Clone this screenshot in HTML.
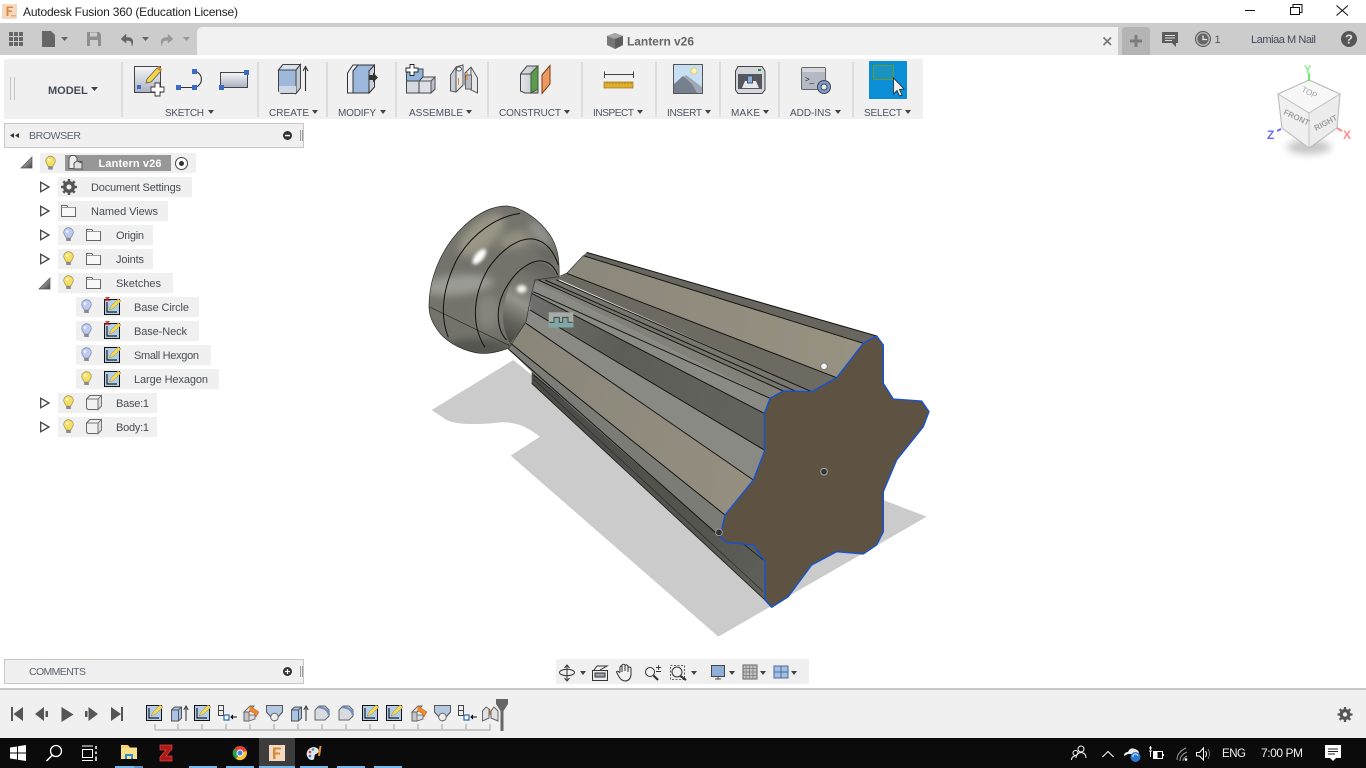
<!DOCTYPE html>
<html><head><meta charset="utf-8"><title>Autodesk Fusion 360</title>
<style>
html,body{margin:0;padding:0;background:#fff;width:1366px;height:768px;overflow:hidden}
svg{display:block;position:absolute;left:0;top:0}
text{font-family:"Liberation Sans",sans-serif}
.t{font-size:11px;fill:#474b55}
.l{font-size:10px;fill:#4b5262}
.ar{fill:#444}
</style></head><body>
<svg width="1366" height="768" viewBox="0 0 1366 768" xmlns="http://www.w3.org/2000/svg">
<defs>
<linearGradient id="g1" x1="0" y1="0" x2="0" y2="1"><stop offset="0" stop-color="#f6f7f9"/><stop offset="1" stop-color="#aab0bf"/></linearGradient>
<linearGradient id="gg" x1="0" y1="0" x2="1" y2="0"><stop offset="0" stop-color="#e6e8ec"/><stop offset="1" stop-color="#b4bac6"/></linearGradient>
<linearGradient id="neck" gradientUnits="userSpaceOnUse" x1="235" y1="420" x2="350" y2="190"><stop offset="0" stop-color="#474843"/><stop offset=".25" stop-color="#666660"/><stop offset=".48" stop-color="#94938c"/><stop offset=".62" stop-color="#7d7c75"/><stop offset="1" stop-color="#63635d"/></linearGradient>
<linearGradient id="tan" gradientUnits="userSpaceOnUse" x1="300" y1="300" x2="1300" y2="500"><stop offset="0" stop-color="#8a867a"/><stop offset="1" stop-color="#979181"/></linearGradient>
<linearGradient id="dk" x1="0" y1="0" x2="1" y2=".3"><stop offset="0" stop-color="#6f706b"/><stop offset=".45" stop-color="#5c5d57"/><stop offset="1" stop-color="#63635d"/></linearGradient>
<linearGradient id="lo" gradientUnits="userSpaceOnUse" x1="400" y1="600" x2="1030" y2="1180"><stop offset="0" stop-color="#4b4c47"/><stop offset=".7" stop-color="#54554f"/><stop offset="1" stop-color="#5f605a"/></linearGradient>
<linearGradient id="corner" x1="0" y1="0" x2="1" y2="1"><stop offset="0" stop-color="#ddd"/><stop offset="1" stop-color="#444"/></linearGradient>
<filter id="b1" x="-50%" y="-50%" width="200%" height="200%"><feGaussianBlur stdDeviation="4"/></filter>
<filter id="b2" x="-50%" y="-50%" width="200%" height="200%"><feGaussianBlur stdDeviation="12"/></filter>
<filter id="b3" x="-50%" y="-50%" width="200%" height="200%"><feGaussianBlur stdDeviation="5"/></filter>
<clipPath id="kc"><path d="M12 320 C12 220 60 130 120 75 C170 30 210 18 245 18 C290 22 340 55 375 105 C395 135 405 170 402 238 L340 330 L260 440 C230 455 190 462 165 460 C120 455 70 430 45 400 C25 375 12 350 12 320Z"/></clipPath>
<g id="by"><path d="M-2.300 4.500 C-2.600 2.500-4.800 1.500-4.800-1 A4.800 4.800 0 1 1 4.800-1 C4.800 1.500 2.600 2.500 2.300 4.500Z" fill="#f6df63" stroke="#a3985a" stroke-width=".8"/><rect x="-2.300" y="4.500" width="4.600" height="3" fill="#8a8a8a"/><circle cx="-1.300" cy="-2" r="1.500" fill="#fdf6c0"/></g>
<g id="bb"><path d="M-2.300 4.500 C-2.600 2.500-4.800 1.500-4.800-1 A4.800 4.800 0 1 1 4.800-1 C4.800 1.500 2.600 2.500 2.300 4.500Z" fill="#bccbee" stroke="#7f8bb0" stroke-width=".8"/><rect x="-2.300" y="4.500" width="4.600" height="3" fill="#8a8a8a"/><circle cx="-1.300" cy="-2" r="1.500" fill="#e7edfb"/></g>
<g id="fo"><path d="M.5 1.500H6L7 3.500H14.500V12.500H.5Z" fill="#f8f8f8" stroke="#666"/><path d="M.5 3.500H14.500" stroke="#999"/></g>
<g id="ar"><path d="M.7 .7 L9 5.500 L.7 10.300Z" fill="#fff" stroke="#444" stroke-width="1.300"/></g>
<g id="ex"><path d="M0 11 L11 0V11Z" fill="url(#corner)" stroke="#555" stroke-width=".7"/></g>
<g id="sk"><rect x=".5" y=".5" width="15" height="15" fill="#b4cde9" stroke="#111"/><path d="M3 3V13H13" fill="none" stroke="#222" stroke-width="1.200"/><path d="M5 11 L7 7 L14 0 L17 2 L10 9Z" fill="#f4d94a" stroke="#888" stroke-width=".5"/></g>
<g id="sk2"><use href="#sk"/><path d="M1-2H6L3.500 1Z" fill="#d33"/><rect x=".5" y=".8" width="6" height="1" fill="#c33"/></g>
<g id="bx"><path d="M.5 4 L4 .5 H15.500 V11 L12 14.500 H2 L.5 13Z" fill="#f1f1f1" stroke="#666"/><path d="M.5 4H12V14.500" fill="none" stroke="#777"/><path d="M12 4 L15.500 .5V11L12 14.500Z" fill="#ddd" stroke="#777"/></g>
<g id="tlext"><path d="M2 5 L5 2 H12 V13 L9 16 H2Z" fill="#a9c3e1" stroke="#555"/><path d="M2 5H9V16M9 5L12 2" fill="none" stroke="#556"/><path d="M16.500 16V2M14.300 5 L16.500 1 L18.700 5" fill="none" stroke="#444" stroke-width="1.100"/></g>
<g id="tlf"><path d="M1 7H6V16H1Z" fill="#c4c6ca" stroke="#666"/><path d="M1 7 L7 1H11L6 7Z" fill="#e8e8e8" stroke="#666"/><path d="M7 1 L16 7 L13 12 L11 8 L6 6" fill="#f08a20" stroke="#a55" stroke-width=".5"/><path d="M6 10H12V14L6 16Z" fill="#ddd" stroke="#777"/></g>
<g id="tld"><path d="M.5 .5H16.500V7L8.500 16 .5 7Z" fill="#b5c8e2" stroke="#555"/><circle cx="8.500" cy="12" r="3.800" fill="#eee" stroke="#666"/></g>
<g id="tlc"><path d="M1 15V5L5 1H11L15 5V11L11 15Z" fill="#d8dae0" stroke="#666"/><path d="M4 2.200 Q13 2 15 10" fill="none" stroke="#6b8fc0" stroke-width="2"/></g>
<g id="tlj"><path d="M.5 .5H5.500V5.500H.5ZM.5 5.500H5.500V10.500H.5Z" fill="#eee" stroke="#444"/><rect x="6" y="10" width="5" height="5" fill="#fff" stroke="#1a66b8" stroke-width="1.200"/><path d="M19 12H13M15 10 L13 12 L15 14" stroke="#111" fill="#111"/></g>
<g id="as"><path d="M.5 16 V6 L4 2 7 4 V13Z M16 16 V6 L12 2 9 6 V13Z" fill="#dfe1e6" stroke="#666"/><path d="M8 4V10" stroke="#e67f20"/></g>
</defs>

<!-- title bar -->
<rect x="0" y="0" width="1366" height="24" fill="#fff"/>
<rect x="2" y="4" width="15" height="15" fill="#f3d9c0"/>
<path d="M6.500 6.500H13V8H8.500V10.500H12V12H8.500V16H6.500Z" fill="#d98a3e"/><rect x="11" y="15" width="5" height="1.500" fill="#e8a874"/>
<text x="23" y="16" font-size="12" fill="#222" textLength="215">Autodesk Fusion 360 (Education License)</text>
<path d="M1245 10.500H1255" stroke="#111"/>
<path d="M1290.500 7.500H1299.500V14.500H1290.500ZM1293 7V4.500H1302V12.500H1300" fill="none" stroke="#111"/>
<path d="M1336.500 5.500 L1348 15.500 M1348 5.500 L1336.500 15.500" stroke="#111" stroke-width="1.100"/>

<!-- tab bar -->
<rect x="0" y="23" width="1366" height="32" fill="#cccccc"/>
<path d="M197 55V33Q197 27 203 27H1118V55Z" fill="#f1f1f1"/>
<path d="M1122 55V31Q1122 27 1126 27H1146Q1150 27 1150 31V55Z" fill="#b4b4b4"/>
<path d="M1130 41H1142M1136 35V47" stroke="#7b7b7b" stroke-width="3"/>
<g fill="#666"><rect x="9" y="32" width="4" height="4"/><rect x="14" y="32" width="4" height="4"/><rect x="19" y="32" width="4" height="4"/><rect x="9" y="37" width="4" height="4"/><rect x="14" y="37" width="4" height="4"/><rect x="19" y="37" width="4" height="4"/><rect x="9" y="42" width="4" height="4"/><rect x="14" y="42" width="4" height="4"/><rect x="19" y="42" width="4" height="4"/></g>
<path d="M42 31H51L55 35V47H42Z" fill="#666"/><path d="M61 37H68L64.500 41Z" fill="#666"/>
<path d="M87 32H99L101 34V46H87Z" fill="#8f8f8f"/><rect x="90" y="32.500" width="7" height="4" fill="#ccc"/><rect x="90" y="40" width="8" height="6" fill="#ccc"/>
<path d="M126 34 L121 39 L126 43V40.500H129Q132 41 132 46 Q135 37 127 37.500H126Z" fill="#666" stroke="#666" stroke-width=".5"/>
<path d="M142 37H149L145.500 41Z" fill="#666"/>
<path d="M168 34 L173 39 L168 43V40.500H165Q162 41 162 46 Q159 37 167 37.500H168Z" fill="#999" stroke="#999" stroke-width=".5"/>
<path d="M183 37H190L186.500 41Z" fill="#999"/>
<path d="M607 36 L615 33 L623 36 V45 L615 49 L607 45Z" fill="#777"/><path d="M607 36 L615 39 L623 36 L615 33Z" fill="#a5a5a5"/><path d="M615 39V49 L623 45V36Z" fill="#5d5d5d"/>
<text x="627" y="45.500" font-size="12" font-weight="bold" fill="#666" textLength="67">Lantern v26</text>
<path d="M1103.500 37.500 L1111 45M1111 37.500 L1103.500 45" stroke="#777" stroke-width="1.600"/>
<path d="M1162 32H1178V43H1176V47 L1172 43H1162Z" fill="#5c5c5c"/><path d="M1165 35.500H1175M1165 38H1175M1165 40.500H1172" stroke="#ddd"/>
<circle cx="1203" cy="39" r="7.500" fill="#b5b5b5" stroke="#555"/><circle cx="1203" cy="39" r="5.500" fill="#666"/><path d="M1203 35.500V39.500H1207" stroke="#eee" fill="none" stroke-width="1.200"/>
<text x="1214.500" y="43" font-size="11" fill="#555">1</text>
<text x="1251" y="43" font-size="11" fill="#44485a" textLength="65">Lamiaa M Nail</text>
<circle cx="1349" cy="39" r="8" fill="#555"/><text x="1349" y="43.500" font-size="13" font-weight="bold" fill="#ddd" text-anchor="middle">?</text>

<!-- toolbar -->
<rect x="4" y="59" width="919" height="60" fill="#f0f0f0"/>
<path d="M10.500 77V100M14.500 77V100" stroke="#c4c4c4"/>
<text x="48" y="94" font-size="11" font-weight="bold" fill="#444a5a">MODEL</text>
<path d="M91 87H98L94.500 91Z" class="ar"/>
<g fill="#dcdcdc"><rect x="121" y="62" width="2" height="55"/><rect x="257" y="62" width="2" height="55"/><rect x="326" y="62" width="2" height="55"/><rect x="395" y="62" width="2" height="55"/><rect x="487" y="62" width="2" height="55"/><rect x="581" y="62" width="2" height="55"/><rect x="655" y="62" width="2" height="55"/><rect x="719" y="62" width="2" height="55"/><rect x="778" y="62" width="2" height="55"/><rect x="852" y="62" width="2" height="55"/></g>

<!-- sketch create -->
<rect x="134.500" y="66.500" width="26" height="26" fill="url(#g1)" stroke="#444"/>
<path d="M146 83 L147 79 L157 68 L161 71 L151 82Z" fill="#f6d448" stroke="#555" stroke-width=".7"/><path d="M157 68 L159 66 L162 69 L161 71Z" fill="#d88a3c"/>
<rect x="137" y="85" width="4" height="4" fill="#3b6cc4"/>
<path d="M155 83H160V87H164V92H160V96H155V92H151V87H155Z" fill="#fff" stroke="#333" stroke-width=".9"/>
<!-- line -->
<path d="M178 87.500H194M194 71 A8.300 8.300 0 0 1 194 87.500" fill="none" stroke="#333" stroke-width="1.100"/>
<g fill="#3b6cc4"><rect x="176" y="85" width="5" height="5"/><rect x="192" y="85" width="5" height="5"/><rect x="192" y="69" width="5" height="5"/></g>
<!-- rect -->
<rect x="220.500" y="72.500" width="27" height="15" fill="url(#g1)" stroke="#444"/>
<rect x="244" y="70" width="5" height="5" fill="#3b6cc4"/><rect x="219" y="85" width="5" height="5" fill="#3b6cc4"/>
<!-- create -->
<path d="M278.500 70 L283 64.500 H300.500 V88 L296 93.500 H281 L278.500 91Z" fill="#9db8d8" stroke="#444"/>
<path d="M278.500 70 L283 64.500 H300.500 L296 70Z" fill="#d4e0ee" stroke="#444"/><path d="M296 70V93.500 L300.500 88V64.500Z" fill="#c4c8d2" stroke="#444"/>
<rect x="279" y="86" width="17" height="7" fill="#cfd7e4"/>
<path d="M305.500 91V68M303 71 L305.500 66.500 L308 71" stroke="#333" fill="none" stroke-width="1.100"/>
<!-- modify -->
<path d="M347.500 73 L353 65 H360 V93 H347.500Z" fill="#eef0f3" stroke="#333"/>
<path d="M353 71 L358 65 H374.500 V87 L369 93 H353Z" fill="#9cb8dc" stroke="#333"/>
<path d="M369 71V93 L374.500 87V65Z" fill="#ccd0da" stroke="#333"/>
<path d="M369 75H373V72.500 L378 77.500 L373 82.500V80H369Z" fill="#333"/>
<!-- assemble -->
<path d="M406.500 73 L410 69 H423 V81 H406.500Z" fill="#92b3dc" stroke="#444"/>
<rect x="406.500" y="81" width="12.500" height="12" fill="#d6d9e0" stroke="#444"/>
<path d="M419 81 L423 77 H435 V89 L431 93 H419Z" fill="#dcdfe5" stroke="#444"/><path d="M419 81H431V93" fill="none" stroke="#555"/><path d="M431 81 L435 77V89L431 93Z" fill="#b9bdc7" stroke="#555"/>
<path d="M410 64.500H414V68H418V72H414V75.500H410V72H406V68H410Z" fill="#fff" stroke="#222" stroke-width=".9"/>
<!-- joint -->
<path d="M450.500 91 V75 L456 67 L463 65 V85 L456 92Z" fill="#c9ccd3" stroke="#555"/><path d="M456 67 L463 65V85L456 92Z" fill="#e6e8ec" stroke="#555"/>
<path d="M465 85 V73 L471 67 L477.500 78 V93 L471 90Z" fill="#e5e7eb" stroke="#555"/><path d="M471 67V90" stroke="#666"/>
<rect x="465.500" y="75" width="6" height="14" fill="#b9bcc4" stroke="#666"/>
<ellipse cx="459" cy="69" rx="2.500" ry="2" fill="#fff" stroke="#555"/>
<path d="M458.500 78V85M467 72V80" stroke="#e8842a"/>
<!-- construct -->
<path d="M520.500 74 L527 66 H538 V93 H525 L520.500 91Z" fill="url(#gg)" stroke="#444"/>
<path d="M531 73 L538 66V89 L531 93Z" fill="#5c9a4d" stroke="#3f5c35"/><path d="M520.500 74H531" stroke="#444"/>
<path d="M542 75 L550 65.500 V84 L542 93.500Z" fill="#ed9a62" stroke="#7a3a14"/>
<!-- inspect -->
<path d="M604.500 71.500V78M633.500 71.500V78M605 74.500H633" stroke="#444"/>
<rect x="604" y="82" width="29" height="6" fill="#dfae2e" stroke="#9a7518" stroke-width=".7"/><path d="M607 82V84M610 82V84M613 82V84M616 82V84M619 82V84M622 82V84M625 82V84M628 82V84M631 82V84" stroke="#9a7518" stroke-width=".7"/>
<!-- insert -->
<rect x="673.500" y="64.500" width="29" height="29" fill="#c6dff3" stroke="#555"/>
<path d="M674 93V85 L686 75 L702 87V93Z" fill="#9fa7b3"/><path d="M674 93V84 L683 76 L692 84 L697 93Z" fill="#767f8d"/>
<circle cx="694" cy="71" r="3" fill="#fff6c4" stroke="#e8cd66"/>
<!-- make -->
<path d="M738 66.500H762L765 71V90L762 93.500H738L735.500 90V71Z" fill="#d4d6db" stroke="#444"/>
<rect x="738" y="74" width="24" height="15" fill="#55575e"/>
<path d="M742 88L745 81H756L759 88Z" fill="#e8e8ea"/><rect x="747.500" y="76" width="5" height="7" fill="#8ab0da" stroke="#456"/>
<rect x="758" y="69" width="3" height="2" fill="#2e8a38"/>
<!-- addins -->
<rect x="801.500" y="67.500" width="24" height="22" rx="1.500" fill="#b5b9c5" stroke="#666"/>
<rect x="802" y="68" width="23" height="4" fill="#d5d7dd"/>
<text x="805" y="82" font-size="8" fill="#222">&gt;_</text>
<circle cx="824" cy="87" r="6.500" fill="#7f9cc8" stroke="#445"/><circle cx="824" cy="87" r="3" fill="#e8ecf2" stroke="#445"/>
<!-- select -->
<rect x="869" y="61" width="38" height="38" fill="#0a8fd6"/>
<rect x="873.500" y="65.500" width="20" height="14" fill="#1a93be" stroke="#6b9a2c"/>
<path d="M893.500 78 V94 L897 90.500 L899.500 96 L902 95 L899.500 89.500 L904 89Z" fill="#eee" stroke="#222" stroke-width=".8"/>

<g>
<text class="l" x="165" y="116" textLength="39">SKETCH</text><path d="M208 110H214L211 114Z" class="ar"/>
<text class="l" x="269" y="116" textLength="40">CREATE</text><path d="M312 110H318L315 114Z" class="ar"/>
<text class="l" x="338" y="116" textLength="38">MODIFY</text><path d="M380 110H386L383 114Z" class="ar"/>
<text class="l" x="409" y="116" textLength="54">ASSEMBLE</text><path d="M466 110H472L469 114Z" class="ar"/>
<text class="l" x="499" y="116" textLength="62">CONSTRUCT</text><path d="M564 110H570L567 114Z" class="ar"/>
<text class="l" x="593" y="116" textLength="41">INSPECT</text><path d="M637 110H643L640 114Z" class="ar"/>
<text class="l" x="667" y="116" textLength="35">INSERT</text><path d="M705 110H711L708 114Z" class="ar"/>
<text class="l" x="731" y="116" textLength="29">MAKE</text><path d="M763 110H769L766 114Z" class="ar"/>
<text class="l" x="790" y="116" textLength="41">ADD-INS</text><path d="M835 110H841L838 114Z" class="ar"/>
<text class="l" x="864" y="116" textLength="38">SELECT</text><path d="M905 110H911L908 114Z" class="ar"/>
</g>

<!-- 3D model: shadow -->
<g transform="translate(420 195) scale(.33333)">
<path d="M35 645 L280 495 L900 1000 L1390 915 L1520 965 L895 1325 L272 782 L360 725 C320 695 290 680 240 682 C180 690 110 690 80 675Z" fill="#cbcbcb"/>
</g>
<!-- knob -->
<g transform="translate(425 200) scale(.33333)">
<g clip-path="url(#kc)">
<rect x="0" y="0" width="450" height="480" fill="#73736c"/>
<ellipse cx="95" cy="255" rx="110" ry="30" transform="rotate(-5 95 255)" fill="#9b9b95" filter="url(#b2)"/>
<ellipse cx="170" cy="105" rx="85" ry="40" transform="rotate(-42 170 105)" fill="#9a9585" filter="url(#b2)"/>
<ellipse cx="345" cy="100" rx="45" ry="20" transform="rotate(50 345 100)" fill="#93938d" filter="url(#b2)"/>
<ellipse cx="270" cy="120" rx="50" ry="26" transform="rotate(-10 270 120)" fill="#938f80" filter="url(#b2)"/>
<ellipse cx="150" cy="445" rx="110" ry="28" fill="#55554f" filter="url(#b2)"/>
<ellipse cx="190" cy="335" rx="35" ry="50" fill="#85847d" filter="url(#b2)"/>
<ellipse cx="365" cy="165" rx="28" ry="12" transform="rotate(30 365 165)" fill="#62625c" filter="url(#b2)"/>
<ellipse cx="163" cy="170" rx="13" ry="28" transform="rotate(40 163 170)" fill="#fff" filter="url(#b3)"/>
<path d="M255 430 C215 360 235 255 300 200 C340 175 375 185 402 238 L340 330Z" fill="url(#neck)"/>
<ellipse cx="290" cy="267" rx="15" ry="12" fill="#f4f2ec" filter="url(#b3)"/>
</g>
<path d="M12 320 C12 220 60 130 120 75 C170 30 210 18 245 18 C290 22 340 55 375 105 C395 135 405 170 402 238 M260 440 C230 455 190 462 165 460 C120 455 70 430 45 400 C25 375 12 350 12 320Z" fill="none" stroke="#2a2a28" stroke-width="2"/>
<path d="M70 412 C45 350 50 270 95 180 C140 100 215 50 285 40" fill="none" stroke="#111" stroke-width="3"/>
<path d="M180 442 C140 380 140 290 190 205 C235 140 290 110 330 118 C360 125 385 150 400 195" fill="none" stroke="#111" stroke-width="3"/>
<path d="M245 420 C215 390 208 320 245 260 C280 200 330 175 360 185 C378 190 390 205 398 225" fill="none" stroke="#111" stroke-width="3"/>
</g>
<g transform="translate(420 195) scale(.33333)">
<!-- body -->
<path d="M335 530V565 L1035 1215 V1100 L1000 1050 L920 1042 L900 1025Z" fill="url(#lo)"/>
<path d="M335 565 L1035 1215 M340 540 L1030 1095" stroke="#1c1c1a" stroke-width="2.500" fill="none"/>
<path d="M340 552 L1030 1190" stroke="#2a2a28" stroke-width="2" fill="none"/>
<path d="M265 462 L272 445 L915 960 L900 1025 L335 530Z" fill="#7c7c76"/>
<path d="M272 445 L318 385 L1000 855 L915 960Z" fill="url(#tan)"/>
<path d="M318 385 L330 345 L1033 768 L1000 855Z" fill="#8a8a84"/>
<path d="M330 345 L335 295 L1033 655 V768Z" fill="url(#dk)"/>
<path d="M335 295 L345 262 L1050 610 L1033 655Z" fill="#8a8a85"/>
<path d="M345 262 L360 255 L1090 588 L1050 610Z" fill="#81817a"/>
<path d="M360 255 L410 255 L1175 590 L1090 588Z" fill="#77766e"/>
<path d="M410 250 L440 235 L1250 548 L1175 590Z" fill="#6c6a61"/>
<path d="M440 235 L490 182 L1330 445 L1250 548Z" fill="url(#tan)"/>
<path d="M490 182 L500 172 L1370 423 L1330 445Z" fill="#68665e"/>
<g stroke="#141413" stroke-width="3" fill="none">
<path d="M500 172 L1370 423"/><path d="M490 182 L1330 445"/><path d="M440 235 L1250 548"/>
<path d="M410 255 L1175 590"/><path d="M375 255 L1130 590"/><path d="M355 255 L1090 588"/>
<path d="M340 290 L1050 610"/><path d="M335 295 L1033 655"/><path d="M330 345 L1033 765"/>
<path d="M318 385 L1000 855"/><path d="M272 445 L915 960"/><path d="M265 462 L900 1025"/>
</g>
<path d="M490 182 L440 235 L415 245 L345 255 L335 295 L318 380 L265 462" fill="none" stroke="#2e2e2b" stroke-width="2"/>
<!-- star -->
<path d="M1370 423 L1390 450 V565 L1420 612 L1505 618 L1527 650 L1510 695 L1430 795 L1390 890 V1010 L1370 1050 L1330 1077 L1250 1070 L1175 1110 L1105 1205 L1055 1237 L1035 1215 V1100 L1000 1050 L920 1042 L900 1025 L915 960 L1000 855 L1033 770 V655 L1050 610 L1090 588 L1175 590 L1250 548 L1330 445Z" fill="#5e5242" stroke="#1152d8" stroke-width="4" stroke-linejoin="round"/>
<!-- dots -->
<circle cx="1212" cy="514" r="10" fill="#f5f5f5" stroke="#777" stroke-width="3"/>
<circle cx="1212" cy="830" r="10" fill="#333" stroke="#aaa" stroke-width="3"/>
<circle cx="897" cy="1012" r="10" fill="#333" stroke="#999" stroke-width="3"/>
<!-- marker -->
<rect x="386" y="352" width="74" height="45" fill="#a9aba6"/>
<path d="M386 382H460V397H386Z" fill="#7fa8a6"/><path d="M388 382H402V367H418V382H428V367H444V382H458" fill="#7fa8a6" stroke="#3d4a48" stroke-width="3"/>
</g>

<!-- browser -->
<rect x="4.500" y="123.500" width="299" height="24" fill="#f0f0f0" stroke="#c8c8c8"/>
<path d="M14 133 L10 135.500 L14 138ZM19 133 L15 135.500 L19 138Z" fill="#333"/>
<text x="29" y="139" font-size="10.500" fill="#5c6270" textLength="52">BROWSER</text>
<circle cx="287.500" cy="135.500" r="4.500" fill="#333"/><rect x="285" y="134.800" width="5" height="1.500" fill="#fff"/>
<path d="M300.500 130V141M302.500 130V141" stroke="#999"/>

<!-- tree rows -->
<g fill="#f0f0f0">
<rect x="40" y="153" width="156" height="20"/>
<rect x="58" y="177" width="134" height="20"/>
<rect x="58" y="201" width="110" height="20"/>
<rect x="58" y="225" width="95" height="20"/>
<rect x="58" y="249" width="95" height="20"/>
<rect x="58" y="273" width="115" height="20"/>
<rect x="76" y="297" width="123" height="20"/>
<rect x="76" y="321" width="123" height="20"/>
<rect x="76" y="345" width="135" height="20"/>
<rect x="76" y="369" width="143" height="20"/>
<rect x="58" y="393" width="99" height="20"/>
<rect x="58" y="417" width="99" height="20"/>
</g>
<use href="#ex" x="21" y="157"/>
<use href="#by" x="50.500" y="162"/>
<rect x="65" y="155" width="106" height="16" fill="#979797"/>
<path d="M69 168.500V158L71 155.500H75L77 158V161.500H82V168.500Z" fill="#eee" stroke="#555"/><path d="M74 163 L77 161 L82 163 L82 169H74Z" fill="#e0e0e0" stroke="#555"/>
<text x="98.500" y="167" font-size="11" font-weight="bold" fill="#fff" textLength="63">Lantern v26</text>
<circle cx="181.500" cy="163.500" r="6" fill="#fff" stroke="#444"/><circle cx="181.500" cy="163.500" r="2.500" fill="#333"/>

<use href="#ar" x="40" y="181.500"/>
<g fill="#555"><circle cx="69" cy="187" r="6" /><path d="M69 179V195M61 187H77M63.300 181.300 L74.700 192.700M74.700 181.300 L63.300 192.700" stroke="#555" stroke-width="2.600"/></g><circle cx="69" cy="187" r="2.500" fill="#f0f0f0"/>
<text class="t" x="91" y="191" textLength="90">Document Settings</text>

<use href="#ar" x="40" y="205.500"/><use href="#fo" x="61" y="204"/>
<text class="t" x="91" y="215" textLength="67">Named Views</text>

<use href="#ar" x="40" y="229.500"/><use href="#bb" x="68.500" y="233.500"/><use href="#fo" x="86" y="228"/>
<text class="t" x="116" y="239" textLength="28">Origin</text>

<use href="#ar" x="40" y="253.500"/><use href="#by" x="68.500" y="257.500"/><use href="#fo" x="86" y="252"/>
<text class="t" x="116" y="263" textLength="28">Joints</text>

<use href="#ex" x="39" y="278"/><use href="#by" x="68.500" y="281.500"/><use href="#fo" x="86" y="276"/>
<text class="t" x="116" y="287" textLength="45">Sketches</text>

<use href="#bb" x="86.500" y="305.500"/><use href="#sk2" x="104" y="299"/>
<text class="t" x="134" y="311" textLength="55">Base Circle</text>
<use href="#bb" x="86.500" y="329.500"/><use href="#sk2" x="104" y="323"/>
<text class="t" x="134" y="335" textLength="53">Base-Neck</text>
<use href="#bb" x="86.500" y="353.500"/><use href="#sk" x="104" y="347"/>
<text class="t" x="134" y="359" textLength="65">Small Hexgon</text>
<use href="#by" x="86.500" y="377.500"/><use href="#sk" x="104" y="371"/>
<text class="t" x="134" y="383" textLength="74">Large Hexagon</text>

<use href="#ar" x="40" y="397.500"/><use href="#by" x="68.500" y="401.500"/><use href="#bx" x="86" y="395"/>
<text class="t" x="116" y="407" textLength="33">Base:1</text>
<use href="#ar" x="40" y="421.500"/><use href="#by" x="68.500" y="425.500"/><use href="#bx" x="86" y="419"/>
<text class="t" x="116" y="431" textLength="33">Body:1</text>

<!-- viewcube -->
<ellipse cx="1309" cy="147" rx="22" ry="7" fill="#888" opacity=".5" filter="url(#b1)"/>
<path d="M1309 80 L1340 94 L1337 128 L1309 148 L1282 128 L1278 94Z" fill="#f1f1f1" stroke="#bbb"/>
<path d="M1309 80 L1340 94 L1309 113 L1278 94Z" fill="#f7f7f7" stroke="#bbb"/>
<path d="M1340 94 L1337 128 L1309 148 L1309 113Z" fill="#ececec"/><path d="M1278 94 L1282 128 L1309 148 L1309 113Z" fill="#f0f0f0"/>
<path d="M1309 113V148M1278 94 L1309 113 L1340 94" stroke="#c4c4c4" fill="none"/>
<path d="M1278 94 L1282 128 L1309 148 L1337 128 L1340 94" fill="none" stroke="#bbb"/>
<text font-size="8" fill="#a5a5a5" transform="translate(1301 91) rotate(28)">TOP</text>
<text font-size="8" font-weight="bold" fill="#a0a0a0" transform="translate(1283 114) rotate(25)">FRONT</text>
<text font-size="8" font-weight="bold" fill="#a0a0a0" transform="translate(1316 131) rotate(-28)">RIGHT</text>
<rect x="1308" y="73" width="2" height="8" fill="#6fe86f"/>
<text x="1304" y="73" font-size="11" font-weight="bold" fill="#80ee80">Y</text>
<path d="M1277 131 L1281 129" stroke="#6a6aff" stroke-width="2"/>
<text x="1267" y="139" font-size="12" font-weight="bold" fill="#6a6aff">Z</text>
<path d="M1337 128 L1342 131" stroke="#ff8888" stroke-width="2"/>
<text x="1343" y="139" font-size="12" font-weight="bold" fill="#ff8a8a">X</text>

<!-- comments -->
<rect x="4.500" y="659.500" width="299" height="24" fill="#f0f0f0" stroke="#c8c8c8"/>
<text x="29" y="675" font-size="10.500" fill="#5c6270" textLength="57">COMMENTS</text>
<circle cx="287.500" cy="671.500" r="4.500" fill="#333"/><path d="M285 671.500H290M287.500 669V674" stroke="#fff" stroke-width="1.200"/>
<path d="M300.500 666V677M302.500 666V677" stroke="#999"/>

<!-- nav bar -->
<rect x="556" y="659" width="253" height="25" fill="#f0f0f0"/>
<g stroke="#333" fill="none" stroke-width="1">
<ellipse cx="567" cy="672.500" rx="7.500" ry="3.200"/><path d="M567 665V681"/><path d="M564.500 668 L567 665 L569.500 668M564.500 678 L567 681 L569.500 678" />
<rect x="592.500" y="670.500" width="15" height="10" fill="#eee"/><rect x="595" y="673" width="10" height="4" fill="#9aa3ad"/><path d="M594 670 L597 666 H607 L600 670"/>
<path d="M620 672 V667 Q621 665 622 667V672M622 671V665Q623.500 663.500 625 665V671M625 671V665.500Q626.500 664 628 666V672M628 671V668Q629.500 666 631 668V675Q630 681 625 681Q621 681 618 675 L616.500 672 Q617.500 670 620 673"/>
<circle cx="650" cy="672" r="4.500"/><path d="M653.500 675.500 L658 680" stroke-width="2.200"/><path d="M656 667.500H661M658.500 665V670M656 671.500H661" stroke-width=".9"/>
<circle cx="677" cy="672" r="5"/><rect x="670.500" y="665.500" width="14" height="14" stroke-dasharray="2 1.500" stroke-width=".8"/><path d="M680.500 676 L686 680" stroke-width="2.200"/>
</g>
<path d="M580 671H586L583 675Z" class="ar"/><path d="M691 671H697L694 675Z" class="ar"/>
<rect x="711.500" y="665.500" width="13" height="11" fill="#90afd6" stroke="#444"/><path d="M715 679H721M718 677V679" stroke="#444"/><path d="M729 671H735L732 675Z" class="ar"/>
<rect x="743" y="665" width="14" height="14" fill="#c4c4c4" stroke="#666"/><path d="M746 665V679M749.500 665V679M753 665V679M743 668.500H757M743 672H757M743 675.500H757" stroke="#777" stroke-width=".7"/><path d="M760 671H766L763 675Z" class="ar"/>
<rect x="774" y="666" width="14" height="12" fill="#a4c0e0" stroke="#4a6a9a"/><path d="M781 666V678M774 672H788" stroke="#4a6a9a"/><path d="M791 671H797L794 675Z" class="ar"/>

<!-- timeline -->
<rect x="0" y="688" width="1366" height="2" fill="#c8c8c8"/>
<rect x="0" y="690" width="1366" height="48" fill="#f0f0f0"/>
<g fill="#555">
<rect x="11" y="707" width="2" height="14"/><path d="M23 707V721L13.500 714Z"/>
<path d="M44 707V721L35 714Z"/><rect x="45.500" y="711" width="2.500" height="6"/>
<path d="M61.500 707V722L73.500 714.500Z"/>
<rect x="85" y="711" width="2.500" height="6"/><path d="M88.500 707V721L98 714Z"/>
<path d="M111 707V721L121 714Z"/><rect x="121" y="707" width="2" height="14"/>
</g>
<path d="M1339.500 714.500a5.500 5.500 0 1 0 11 0a5.500 5.500 0 1 0 -11 0" fill="#555"/><path d="M1345 707V722M1337.500 714.500H1352.500M1339.700 709.200 L1350.300 719.800M1350.300 709.200 L1339.700 719.800" stroke="#555" stroke-width="2.300"/><circle cx="1345" cy="714.500" r="2.200" fill="#f0f0f0"/>

<use href="#sk" x="146" y="705"/>
<use href="#tlext" x="169.500" y="705"/>
<use href="#sk" x="194" y="705"/>
<use href="#tlj" x="218" y="705"/>
<use href="#tlf" x="243" y="705"/>
<use href="#tld" x="266" y="705"/>
<use href="#tlext" x="289.500" y="705"/>
<use href="#tlc" x="314" y="705"/>
<use href="#tlc" x="338" y="705"/>
<use href="#sk" x="362" y="705"/>
<use href="#sk" x="386" y="705"/>
<use href="#tlf" x="411" y="705"/>
<use href="#tld" x="434" y="705"/>
<use href="#tlj" x="458" y="705"/>
<use href="#as" x="482" y="705"/>

<path d="M155 730H491M155 724V730M178 724V730M202 724V730M226 724V730M250 724V730M274 724V730M298 724V730M322 724V730M346 724V730M370 724V730M394 724V730M418 724V730M442 724V730M466 724V730M490 724V730" stroke="#c8c8c8" stroke-width="2" fill="none"/>
<path d="M496 699H508V704L503.500 711V731H500.500V711L496 704Z" fill="#666"/>

<!-- taskbar -->
<rect x="0" y="738" width="1366" height="30" fill="#0b0b0b"/>
<rect x="259" y="738" width="36" height="30" fill="#3d3d3d"/>
<g fill="#76b9ed">
<rect x="115" y="766" width="19" height="2"/><rect x="134" y="766" width="9" height="2" fill="#5b93c0"/>
<rect x="189" y="766" width="28" height="2"/><rect x="226" y="766" width="28" height="2"/><rect x="259" y="766" width="36" height="2"/><rect x="300" y="766" width="28" height="2"/><rect x="337" y="766" width="28" height="2"/><rect x="374" y="766" width="28" height="2"/>
</g>
<path d="M10 747.500 L17 746.500V752.500H10ZM18 746.300 L26 745V752.500H18ZM10 753.500H17V759.500L10 758.500ZM18 753.500H26V761L18 759.700Z" fill="#fff"/>
<circle cx="56" cy="751" r="5.500" fill="none" stroke="#fff" stroke-width="1.300"/><path d="M52 755.500 L46.500 761" stroke="#fff" stroke-width="1.500"/>
<path d="M82 746H93M82 760.500H93" stroke="#fff"/><rect x="82.500" y="749.500" width="10" height="8" fill="none" stroke="#fff"/><path d="M96 746V749M96 751.500V754M96 756.500V761" stroke="#fff" stroke-width="1.500"/>
<path d="M121 745H128L130 747.500H137V759H121Z" fill="#f6d36b"/><rect x="121" y="748" width="16" height="11" fill="#fbe08b"/><path d="M125 759V754H133V759H131V756H127V759Z" fill="#2d8ed6"/>
<path d="M160 745H172V749L166 756H172V761H160V757L166 750H160Z" fill="#b11818" stroke="#e04545" stroke-width=".7"/>
<circle cx="240" cy="753" r="7" fill="#e14434"/><path d="M240 753 L246.500 751 A7 7 0 0 1 236 759 Z" fill="#f8c534"/><path d="M240 753 L236 759 A7 7 0 0 1 234 749Z" fill="#2f9e4a"/><circle cx="240" cy="753" r="3" fill="#3f7fe0" stroke="#fff"/>
<rect x="269" y="745" width="16" height="16" fill="#f3d9c0"/><path d="M273 747.500H281V749.500H275.500V752.500H280V754.500H275.500V759H273Z" fill="#d98a3e"/>
<path d="M307 756 C305 750 312 745 317 748 C320 750 319 753 316 754 C313 755 316 760 312 760 C309 760 308 758 307 756Z" fill="#dfe4ea"/><circle cx="310" cy="752" r="1.300" fill="#e33"/><circle cx="313" cy="749.500" r="1.300" fill="#3a9"/><circle cx="310" cy="756" r="1.300" fill="#37c"/><path d="M319 756 L320.500 746" stroke="#e8912a" stroke-width="2"/>

<!-- tray -->
<g stroke="#fff" fill="none" stroke-width="1">
<circle cx="1081" cy="749" r="3"/><path d="M1076 758Q1076 753 1081 752.500Q1086 753 1086 758"/><circle cx="1075.500" cy="753" r="2.500"/><path d="M1071.500 760Q1071.500 756.500 1075 756"/>
<path d="M1102.500 757 L1108 751.500 L1113.500 757"/>
<path d="M1149 748H1152M1149 751H1152M1150.500 746V750M1150.500 751V757"/><rect x="1153.500" y="751.500" width="9" height="7"/><rect x="1154" y="752" width="3" height="6" fill="#fff"/><path d="M1163.500 754V756"/>
<path d="M1177 760Q1177 752 1186 748M1180 761Q1180 755 1187 752M1183 761Q1183 758 1187 756" stroke="#999"/>
<path d="M1196.500 752.500H1199.500L1203.500 748V760L1199.500 756H1196.500Z"/><path d="M1205.500 751Q1207.500 754 1205.500 757"/><path d="M1208 749Q1211 754 1208 759" stroke="#777"/>
</g>
<path d="M1124 756Q1124 752 1128 752Q1130 747 1135 749Q1139 750 1139 754H1128Z" fill="#eee"/>
<circle cx="1135.500" cy="757" r="5" fill="#2a78d0"/><path d="M1133 757A2.500 2.500 0 0 1 1138 756" stroke="#fff" fill="none"/>
<circle cx="1186" cy="759.500" r="1.300" fill="#fff"/>
<text x="1222" y="757" font-size="11.500" fill="#eee" textLength="24">ENG</text>
<text x="1261" y="757" font-size="12" fill="#eee" textLength="42">7:00 PM</text>
<path d="M1325 745H1341V758H1336L1333 761L1330 758H1325Z" fill="#fff"/><path d="M1328 749H1338M1328 751.500H1338M1328 754H1335" stroke="#222"/>
</svg>
</body></html>
